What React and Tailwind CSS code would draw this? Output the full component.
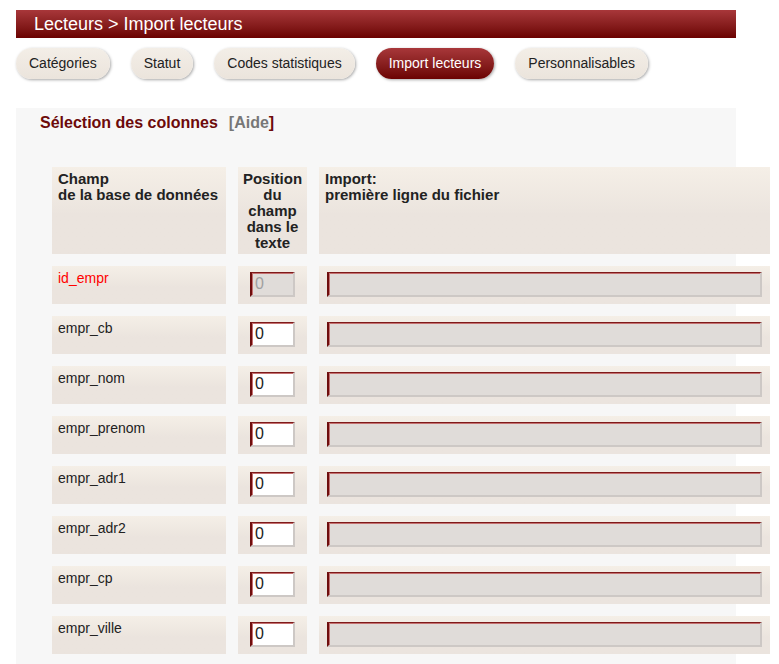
import React from 'react';

const tabs = ['Catégories', 'Statut', 'Codes statistiques', 'Import lecteurs', 'Personnalisables'];

const fields = ['id_empr', 'empr_cb', 'empr_nom', 'empr_prenom', 'empr_adr1', 'empr_adr2', 'empr_cp', 'empr_ville'];

const cellBg = 'bg-gradient-to-b from-[#f5efe7] via-[#ebe4de] via-55% to-[#ebe4de]';
const inputBorder =
  'border-l-2 border-t border-r-2 border-b-2 border-l-[#6e0e0e] border-t-[#7e1a1a] border-r-[#cdc8c5] border-b-[#cdc8c5] shadow-[inset_1px_1px_0_#c47070] outline-none';

const Tab = ({ label, active }) => (
  <span
    className={`inline-flex items-center h-[31px] px-[13px] rounded-full text-[14px] shadow-[1px_1px_3px_rgba(0,0,0,0.35)] ${
      active
        ? 'bg-gradient-to-b from-[#a8373a] to-[#6b0202] text-white'
        : 'bg-gradient-to-b from-[#f3eee7] to-[#ebe4dc] text-[#222]'
    }`}
  >
    {label}
  </span>
);

const FieldRow = ({ name, index }) => {
  const locked = index === 0;
  return (
    <>
      <div className={`${cellBg} h-[38px] px-1.5 pt-1 text-[14px] leading-4 ${locked ? 'text-[#ff0000]' : 'text-[#222]'}`}>
        {name}
      </div>
      <div className={`${cellBg} h-[38px] flex justify-center pt-1.5`}>
        <input
          type="text"
          defaultValue="0"
          disabled={locked}
          className={`w-[45px] h-[25px] pl-[3px] text-[16px] leading-none ${inputBorder} ${
            locked ? 'bg-[#e0dcd9] text-[#a0a0a0]' : 'bg-white text-[#222]'
          }`}
        />
      </div>
      <div className={`${cellBg} h-[38px] flex justify-center pt-1.5`}>
        <input type="text" disabled className={`w-[435px] h-[25px] bg-[#e0dcd9] ${inputBorder}`} />
      </div>
    </>
  );
};

export default function App() {
  return (
    <div className="min-h-screen bg-white px-4 pt-[10px] font-['Liberation_Sans',Arial,sans-serif] text-[#222]">
      {/* Title bar */}
      <div className="w-[720px] h-7 flex items-center pl-[18px] bg-gradient-to-b from-[#a8373a] to-[#6b0101] text-white text-[18px]">
        Lecteurs &gt; Import lecteurs
      </div>

      {/* Tabs */}
      <div className="flex gap-[21px] mt-[10px]">
        {tabs.map((t) => (
          <Tab key={t} label={t} active={t === 'Import lecteurs'} />
        ))}
      </div>

      {/* Column selection panel */}
      <div className="w-[720px] mt-[29px] bg-[#f7f7f7] pt-[5px] pb-3">
        <div className="pl-6 text-[16px] leading-5 font-bold">
          <span className="text-[#6d0a0a]">Sélection des colonnes</span>
          <span className="ml-[11px] text-[#777]">[Aide</span>
          <span className="text-[#6d0a0a]">]</span>
        </div>

        <div className="ml-9 mt-[34px] grid grid-cols-[174px_69px_451px] gap-3">
          <div className={`${cellBg} h-[87px] px-1.5 pt-1 text-[15px] leading-4 font-bold`}>
            Champ
            <br />
            de la base de données
          </div>
          <div className={`${cellBg} h-[87px] pt-1 text-center text-[15px] leading-4 font-bold`}>
            Position
            <br />
            du
            <br />
            champ
            <br />
            dans le
            <br />
            texte
          </div>
          <div className={`${cellBg} h-[87px] px-1.5 pt-1 text-[15px] leading-4 font-bold`}>
            Import:
            <br />
            première ligne du fichier
          </div>

          {fields.map((f, i) => (
            <FieldRow key={f} name={f} index={i} />
          ))}
        </div>
      </div>
    </div>
  );
}
